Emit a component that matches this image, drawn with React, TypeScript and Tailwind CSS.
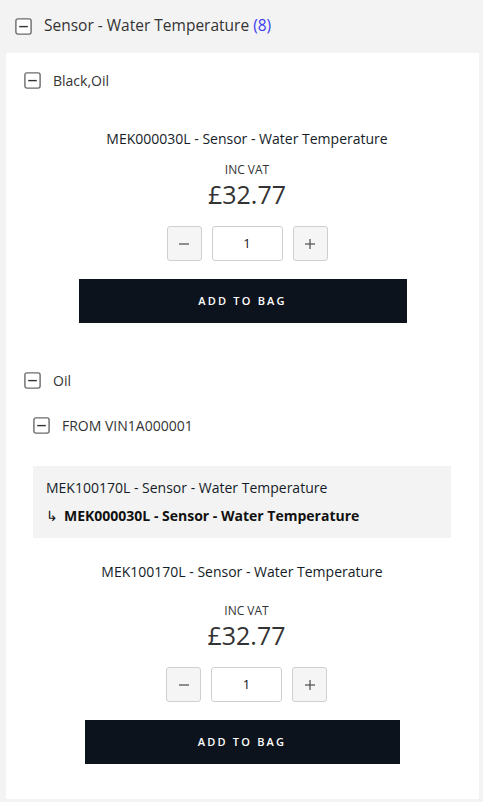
import { useState } from 'react';

const font = { fontFamily: '"Open Sans", "Noto Sans", sans-serif' };

function CollapseIcon({ size = 17 }: { size?: number }) {
  return (
    <svg width={size} height={size} viewBox="0 0 17 17" className="shrink-0">
      <rect x="0.9" y="0.9" width="15.2" height="15.2" rx="2" fill="white" stroke="#6b6b6b" strokeWidth="1.4" />
      <line x1="4.2" y1="8.6" x2="12.8" y2="8.6" stroke="#333" strokeWidth="1.4" />
    </svg>
  );
}

function Qty() {
  const [qty, setQty] = useState(1);
  return (
    <div className="flex justify-center gap-[10px]">
      <button
        type="button"
        onClick={() => setQty((q) => Math.max(1, q - 1))}
        className="flex h-[35px] w-[35px] items-center justify-center rounded-[3px] border border-[#cfcfcf] bg-[#f5f5f5]"
      >
        <svg width="12" height="12" viewBox="0 0 12 12">
          <line x1="1" y1="6" x2="11" y2="6" stroke="#555" strokeWidth="1.3" />
        </svg>
      </button>
      <div className="flex h-[35px] w-[71px] items-center justify-center rounded-[3px] border border-[#cfcfcf] bg-white text-[13px] text-[#111]">
        {qty}
      </div>
      <button
        type="button"
        onClick={() => setQty((q) => q + 1)}
        className="flex h-[35px] w-[35px] items-center justify-center rounded-[3px] border border-[#cfcfcf] bg-[#f5f5f5]"
      >
        <svg width="12" height="12" viewBox="0 0 12 12">
          <line x1="1" y1="6" x2="11" y2="6" stroke="#555" strokeWidth="1.3" />
          <line x1="6" y1="1" x2="6" y2="11" stroke="#555" strokeWidth="1.3" />
        </svg>
      </button>
    </div>
  );
}

type ProductProps = {
  title: string;
  titleShift: string;
  btnWidth: string;
  vatGap: string;
  priceGap: string;
  qtyGap: string;
};

// price/qty sit a few px right of the button's centre in the original, keep that
function Product({ title, titleShift, btnWidth, vatGap, priceGap, qtyGap }: ProductProps) {
  return (
    <div className="flex flex-col items-center">
      <div className={`${titleShift} h-[18px] text-[14px] leading-[18px] text-[#151c28]`}>{title}</div>
      <div className={`${vatGap} h-[16px] pl-[9px] text-[12px] leading-[16px] text-[#333]`}>INC VAT</div>
      <div className={`${priceGap} h-[30px] pl-[9px] text-[25px] leading-[30px] text-[#333]`}>£32.77</div>
      <div className={`${qtyGap} pl-[9px]`}>
        <Qty />
      </div>
      <button
        type="button"
        className={`${btnWidth} mt-[18px] h-[44px] bg-[#0d131c] text-[11px] font-semibold tracking-[0.2em] text-white`}
      >
        ADD TO BAG
      </button>
    </div>
  );
}

export default function App() {
  return (
    <div className="min-h-screen bg-[#f3f3f3] pl-[6px] pr-[4px]" style={font}>
      <header className="flex h-[53px] items-center gap-[12px] pl-[9px] pb-[1px]">
        <CollapseIcon />
        <span className="text-[15.5px] text-[#333]">
          Sensor - Water Temperature <span className="text-[#3d3df0]">(8)</span>
        </span>
      </header>

      <main className="h-[746px] bg-white px-[18px] pt-[19px]">
        <div className="flex h-[17px] items-center gap-[12px]">
          <CollapseIcon />
          <span className="text-[14px] text-[#333]">Black,Oil</span>
        </div>

        <div className="mt-[41px]">
          <Product
            title="MEK000030L - Sensor - Water Temperature"
            titleShift="pl-[9px]"
            btnWidth="w-[328px]"
            vatGap="mt-[14px]"
            priceGap="mt-[1px]"
            qtyGap="mt-[17px]"
          />
        </div>

        <div className="mt-[49px] flex h-[17px] items-center gap-[12px]">
          <CollapseIcon />
          <span className="text-[14px] text-[#333]">Oil</span>
        </div>

        <div className="pl-[9px] pr-[10px]">
          <div className="mt-[28px] flex h-[17px] items-center gap-[12px]">
            <CollapseIcon />
            <span className="text-[14px] text-[#333]">FROM VIN1A000001</span>
          </div>

          <div className="mt-[32px] flex h-[72px] flex-col justify-center gap-[10px] bg-[#f3f3f3] px-[13px]">
            <div className="text-[14px] leading-[18px] text-[#151c28]">
              MEK100170L - Sensor - Water Temperature
            </div>
            <div className="flex items-center gap-[6px] text-[14px] font-bold leading-[18px] text-[#111]">
              <span className="font-normal">↳</span>
              MEK000030L - Sensor - Water Temperature
            </div>
          </div>

          <div className="mt-[25px]">
            <Product
              title="MEK100170L - Sensor - Water Temperature"
              titleShift="pl-0"
              btnWidth="w-[315px]"
              vatGap="mt-[22px]"
              priceGap="mt-[1px]"
              qtyGap="mt-[17px]"
            />
          </div>
        </div>
      </main>
    </div>
  );
}
